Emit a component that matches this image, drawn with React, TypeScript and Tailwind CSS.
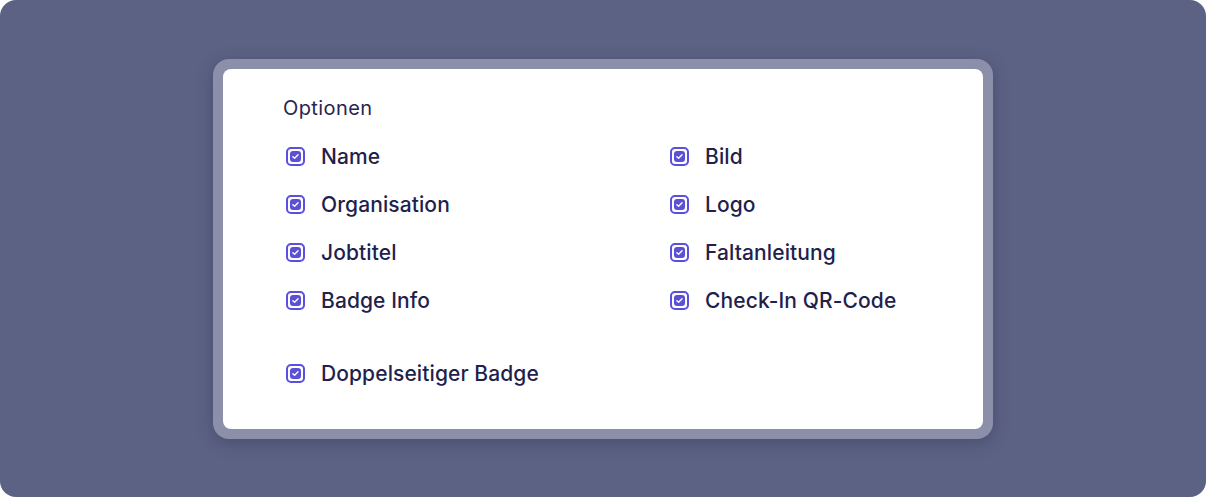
const left = ['Name', 'Organisation', 'Jobtitel', 'Badge Info']
const right = ['Bild', 'Logo', 'Faltanleitung', 'Check-In QR-Code']

function Check(): JSX.Element {
  return (
    <span className="flex h-[19px] w-[19px] shrink-0 items-center justify-center rounded-[5px] border-2 border-[#5a4fe3] bg-white">
      <span className="flex h-[11px] w-[11px] items-center justify-center rounded-[3px] bg-[#5b51d6]">
        <svg viewBox="0 0 12 12" className="h-[9px] w-[9px]" fill="none" aria-hidden="true">
          <path d="M2.5 6.3 4.8 8.4 9.4 3.6" stroke="white" strokeWidth="1.8" strokeLinecap="round" strokeLinejoin="round" />
        </svg>
      </span>
    </span>
  )
}

function Option({ label }: { label: string }): JSX.Element {
  return (
    <label className="flex h-[48px] items-center">
      <span className="ml-[3px] mr-[16px]">
        <Check />
      </span>
      <span className="text-[21px] font-medium tracking-[0.1px] text-[#231f4c]">{label}</span>
    </label>
  )
}

export default function App(): JSX.Element {
  return (
    <div className="flex h-[497px] w-[1206px] items-center justify-center bg-white font-['Inter',sans-serif]">
      <div className="flex h-full w-full items-center justify-center rounded-[16px] bg-[#5c6283]">
        <div className="rounded-[16px] bg-[#8b8fa9] p-[10px] shadow-[0_4px_16px_rgba(40,44,80,0.35)]">
          <div className="h-[360px] w-[760px] rounded-[8px] bg-white pl-[60px] pt-[24px]">
            <div className="text-[20px] font-normal tracking-[0.4px] text-[#28244f]">Optionen</div>
            <div className="mt-[10px] grid grid-cols-[384px_1fr]">
              <div className="flex flex-col">
                {left.map((l) => (
                  <Option key={l} label={l} />
                ))}
              </div>
              <div className="flex flex-col">
                {right.map((l) => (
                  <Option key={l} label={l} />
                ))}
              </div>
            </div>
            <div className="mt-[25px]">
              <Option label="Doppelseitiger Badge" />
            </div>
          </div>
        </div>
      </div>
    </div>
  )
}
